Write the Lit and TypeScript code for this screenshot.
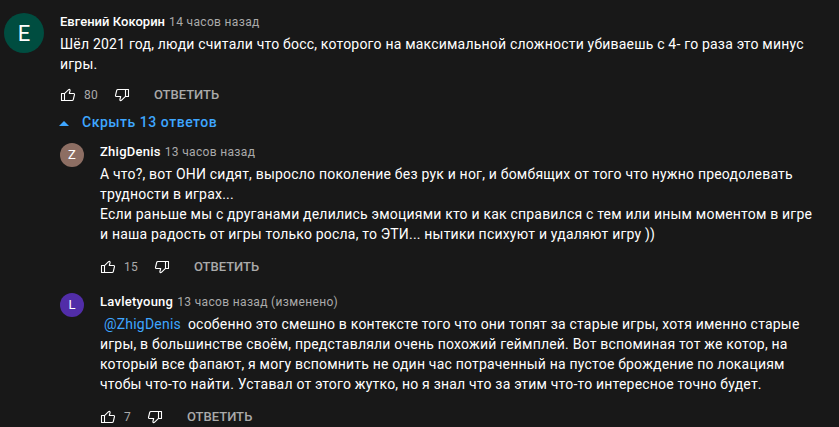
import { LitElement, html, css, svg } from "lit";
import { customElement, property } from "lit/decorators.js";

interface Comment {
  name: string;
  time: string;
  letter: string;
  kind: string;
  likes: string;
  mention?: string;
  lines: string[];
}

const root: Comment = {
  name: "Евгений Кокорин", time: "14 часов назад", letter: "E", kind: "root", likes: "80",
  lines: ["Шёл 2021 год, люди считали что босс, которого на максимальной сложности убиваешь с 4- го раза это минус", "игры."],
};
const replies: Comment[] = [
  { name: "ZhigDenis", time: "13 часов назад", letter: "Z", kind: "zhig", likes: "15",
    lines: ["А что?, вот ОНИ сидят, выросло поколение без рук и ног, и бомбящих от того что нужно преодолевать", "трудности в играх...", "Если раньше мы с друганами делились эмоциями кто и как справился с тем или иным моментом в игре", "и наша радость от игры только росла, то ЭТИ... нытики психуют и удаляют игру ))"] },
  { name: "Lavletyoung", time: "13 часов назад (изменено)", letter: "L", kind: "lav", likes: "7", mention: "@ZhigDenis",
    lines: ["особенно это смешно в контексте того что они топят за старые игры, хотя именно старые", "игры, в большинстве своём, представляли очень похожий геймплей. Вот вспоминая тот же котор, на", "который все фапают, я могу вспомнить не один час потраченный на пустое брождение по локациям", "чтобы что-то найти. Уставал от этого жутко, но я знал что за этим что-то интересное точно будет."] },
];

const thumb = () => svg`<path d="M1.5 5.5h3v7h-3zM4.5 5.7 8.6 1.7c.8-.6 1.7-.1 1.5.8L9.3 5.5h4.4c.6 0 .9.4.8 1l-1.2 5c-.2.7-.5 1-1.2 1H4.5"></path>`;

@customElement("comment-item")
export class CommentItem extends LitElement {
  @property({ attribute: false }) data!: Comment;
  static styles = css`
    :host { display: flex; }
    .avatar { flex: none; box-sizing: border-box; width: 24px; height: 24px; margin: 1px 16px 0 0; border-radius: 50%; display: flex; align-items: center; justify-content: center; color: #fff; font-size: 13px; line-height: 24px; }
    .root { width: 40px; height: 40px; padding-top: 1px; font-size: 22px; background: #004d40; }
    .zhig { background: #8d6e63; }
    .lav { background: #512da8; }
    .head { height: 18px; line-height: 18px; margin: 1px 0 3px; white-space: pre; font-size: 13px; color: #aaa; }
    .name { font-weight: 500; color: #fff; margin-right: 4px; letter-spacing: 0.25px; }
    .root + div .name { letter-spacing: 0.03px; }
    .time { font-size: 12px; letter-spacing: 0.34px; }
    .line { font-size: 14px; line-height: 20px; letter-spacing: 0.2px; color: #fff; white-space: pre; }
    .mention { color: #3ea6ff; margin: 0 7px 0 4px; }
    .actions { display: flex; align-items: center; height: 24px; margin-top: 10px; color: #aaa; font-size: 12px; }
    .root + div .actions { margin-top: 8px; }
    .icon { width: 16px; height: 14px; margin-top: 2px; fill: none; stroke: #fff; stroke-width: 1.1; stroke-linejoin: round; }
    .down { transform: rotate(180deg); }
    .count { margin: 1px 16px 0 8px; letter-spacing: 0.2px; }
    .reply { margin-left: 24px; font-size: 13px; font-weight: 500; }
  `;
  render() {
    const d = this.data;
    return html`
      <div class="avatar ${d.kind}">${d.letter}</div>
      <div>
        <div class="head"><span class="name">${d.name}</span><span class="time">${d.time}</span></div>
        ${d.lines.map((l, i) => html`<div class="line">${i === 0 && d.mention ? html`<span class="mention">${d.mention}</span>` : ""}${l}</div>`)}
        <div class="actions">
          <svg class="icon" viewBox="0 0 16 14">${thumb()}</svg><span class="count">${d.likes}</span>
          <svg class="icon down" viewBox="0 0 16 14">${thumb()}</svg><span class="reply">ОТВЕТИТЬ</span>
        </div>
      </div>`;
  }
}

@customElement("app-root")
export class AppRoot extends LitElement {
  static styles = css`
    :host { display: block; box-sizing: border-box; width: 839px; height: 427px; overflow: hidden; background: #181818; padding: 12px 0 0 4px; font-family: Roboto, sans-serif; }
    .toggle { display: flex; align-items: center; height: 32px; margin-left: 56px; color: #3ea6ff; font-size: 14px; font-weight: 500; letter-spacing: 0.53px; }
    .arrow { width: 10px; height: 5px; fill: #3ea6ff; margin: 3px 13px 0 -1px; }
    .replies { display: flex; flex-direction: column; gap: 14px; padding: 4px 0 0 56px; }
  `;
  render() {
    return html`
      <comment-item .data=${root}></comment-item>
      <div class="toggle"><svg class="arrow" viewBox="0 0 10 5"><path d="M0 5 5 0l5 5z"></path></svg>Скрыть 13 ответов</div>
      <div class="replies">${replies.map((r) => html`<comment-item .data=${r}></comment-item>`)}</div>`;
  }
}
